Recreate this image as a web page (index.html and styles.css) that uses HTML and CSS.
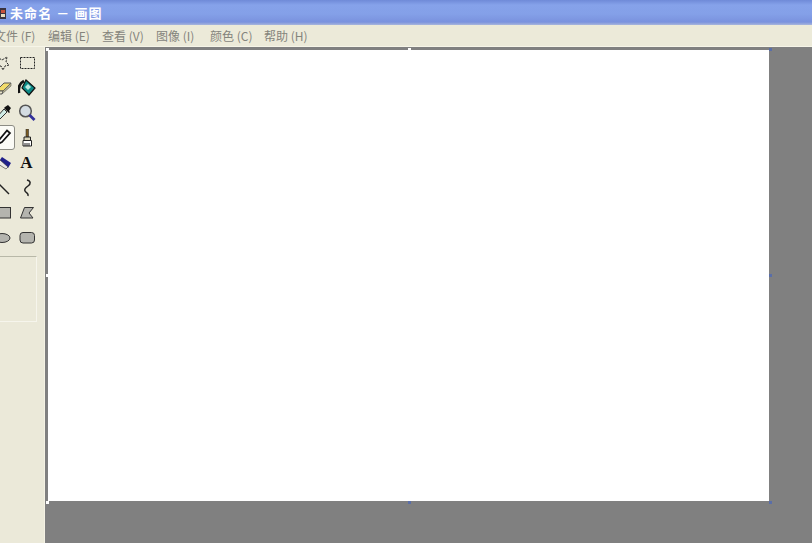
FILE: index.html
```html
<!DOCTYPE html>
<html lang="zh">
<head>
<meta charset="utf-8">
<title>未命名 - 画图</title>
<link rel="stylesheet" href="styles.css">
</head>
<body>
<div class="app">
  <header class="titlebar">
    <svg class="appicon" width="16" height="16" viewBox="0 0 16 16"><path d="M8 3h6v11H8z" fill="#3a3340"/><path d="M9 5h4v3H9z" fill="#c8503c"/><path d="M9 9h4v3H9z" fill="#e8dcc0"/></svg>
    <span class="title">未命名 － 画图</span>
  </header>
  <nav class="menubar">
    <span class="menu first">文件 (F)</span>
    <span class="menu">编辑 (E)</span>
    <span class="menu">查看 (V)</span>
    <span class="menu">图像 (I)</span>
    <span class="menu">颜色 (C)</span>
    <span class="menu">帮助 (H)</span>
  </nav>
  <div class="body">
    <aside class="sidebar">
      <div class="tools">
        <div class="tool"><svg width="18" height="18" viewBox="0 0 18 18"><path d="M3 3l5 3 5-3-1 5 3 3-4 1-2 4-2-4-5 0 3-4z" fill="none" stroke="#222" stroke-dasharray="2 1"/></svg></div>
        <div class="tool"><svg width="18" height="18" viewBox="0 0 18 18"><rect x="2.500" y="3.500" width="14" height="11" fill="none" stroke="#222" stroke-dasharray="2 1"/></svg></div>

        <div class="tool"><svg width="18" height="18" viewBox="0 0 18 18"><path d="M2 12l8-8h7l-8 8z" fill="#f2dc6a" stroke="#555"/><path d="M2 12l1 3h5l1-3z" fill="#e8e4c8" stroke="#555"/><path d="M8 15l9-8V4l-8 8z" fill="#b8b48c" stroke="#555" stroke-width=".6"/></svg></div>
        <div class="tool"><svg width="18" height="18" viewBox="0 0 18 18"><path d="M8 1l9 8-6 7-7-7z" fill="#0c8a86" stroke="#111" stroke-width="1.200"/><path d="M10 5l3 3-3 3-3-3z" fill="#b8e8e0"/><path d="M6 2C2 4 0 8 1 14" fill="none" stroke="#111" stroke-width="2.800"/></svg></div>

        <div class="tool"><svg width="18" height="18" viewBox="0 0 18 18"><path d="M11 3l3-2 3 3-2 3 1 1-1 1-5-5 1-1z" fill="#111"/><path d="M10 5l3 3-7 7-3 1 0-3z" fill="#d0ece6" stroke="#333"/><path d="M1 13l4 3-4 2z" fill="#1aa99a"/></svg></div>
        <div class="tool"><svg width="18" height="18" viewBox="0 0 18 18"><circle cx="7.500" cy="7" r="5.800" fill="#d4dce2" stroke="#555" stroke-width="1.500"/><path d="M11.500 11l5 5" stroke="#33309a" stroke-width="2.800"/></svg></div>

        <div class="tool selected"><svg width="18" height="18" viewBox="0 0 18 18"><path d="M13 1.500l3 2.500-8 9-4 2 1-4z" fill="#fff" stroke="#111" stroke-width="1.700"/><path d="M5 15c-2 1-3 2-2 3" fill="none" stroke="#111" stroke-width="1.500"/></svg></div>
        <div class="tool"><svg width="18" height="18" viewBox="0 0 18 18"><path d="M8 0h2.500v8H8z" fill="#7a5a20" stroke="#333" stroke-width=".6"/><path d="M6 8h6.500v3.500H6z" fill="#d8d4b8" stroke="#222"/><path d="M5 11.500h8.500V17H5z" fill="#fff" stroke="#222"/><path d="M7 14v3M9 14v3M11 14v3" stroke="#222"/></svg></div>

        <div class="tool"><svg width="18" height="18" viewBox="0 0 18 18"><path d="M8 3l9 6-3 5-9-7z" fill="#20208a"/><path d="M6 6l8 7-2 2-8-5z" fill="#ece9e8" stroke="#333" stroke-width=".6"/></svg></div>
        <div class="tool"><span class="letter">A</span></div>

        <div class="tool"><svg width="18" height="18" viewBox="0 0 18 18"><path d="M3 3l12 12" stroke="#222" stroke-width="1.500" fill="none"/></svg></div>
        <div class="tool"><svg width="18" height="18" viewBox="0 0 18 18"><path d="M9 1c4 1 4 4 1 6S6 10 7 12s4 2 3 5" fill="none" stroke="#222" stroke-width="1.500"/></svg></div>

        <div class="tool"><svg width="18" height="18" viewBox="0 0 18 18"><rect x="2" y="3.500" width="14.500" height="10.500" fill="#b4b4ae" stroke="#333"/></svg></div>
        <div class="tool"><svg width="18" height="18" viewBox="0 0 18 18"><path d="M6.500 3.500h9L11 9l4 5H2.500z" fill="#b4b4ae" stroke="#333"/></svg></div>

        <div class="tool"><svg width="18" height="18" viewBox="0 0 18 18"><ellipse cx="8" cy="9" rx="8" ry="4.500" fill="#b4b4ae" stroke="#333"/></svg></div>
        <div class="tool"><svg width="18" height="18" viewBox="0 0 18 18"><rect x="2" y="3.500" width="14.500" height="10.500" rx="3" fill="#b4b4ae" stroke="#333"/></svg></div>
      </div>
      <div class="options"></div>
    </aside>
    <main class="workspace">
      <div class="canvas">
        <i class="handle tl"></i><i class="handle tc"></i><i class="handle tr"></i>
        <i class="handle ml"></i><i class="handle mr"></i>
        <i class="handle bl"></i><i class="handle bc"></i><i class="handle br"></i>
      </div>
    </main>
  </div>
</div>
</body>
</html>
```
FILE: styles.css
```css
* { box-sizing: border-box; }
html, body { margin: 0; height: 100%; overflow: hidden; }
body { font-family: "Liberation Sans", "Noto Sans CJK SC", sans-serif; }

.app { width: 812px; height: 543px; display: flex; flex-direction: column; overflow: hidden; }

.titlebar {
  height: 25px;
  flex: none;
  display: flex;
  align-items: center;
  gap: 2px;
  margin-left: -8px;
  background: linear-gradient(#6f8ad8 0, #86a2ea 5px, #84a0e8 14px, #7a92de 22px, #a8b6dc 25px);
}
.appicon { flex: none; }
.title {
  color: #fff;
  font: bold 13px "Noto Sans CJK SC", sans-serif;
  letter-spacing: 1.1px;
  white-space: pre;
}

.menubar {
  height: 22px;
  flex: none;
  display: flex;
  align-items: center;
  margin-left: -6px;
  background: #ecead9;
  border-bottom: 1px solid #f6f5e8;
  font: 12px "Noto Sans CJK SC", sans-serif;
  color: #84847c;
}
.menu { width: 54px; flex: none; white-space: nowrap; }

.body { flex: 1; display: flex; min-height: 0; }

.sidebar {
  width: 45px;
  flex: none;
  background: #ebe9d9;
  border-right: 1px solid #f4f2e4;
  overflow: hidden;
  padding-top: 3px;
}
.tools {
  display: grid;
  grid-template-columns: 25px 23px;
  grid-auto-rows: 25px;
  margin-left: -10px;
}
.tool { display: flex; align-items: center; justify-content: center; }
.tool.selected { background: #fbfbf6; border: 1px solid #8c8c84; border-radius: 3px; }
.letter { font: bold 17px "Liberation Serif", serif; color: #111; }

.options {
  width: 49px;
  height: 66px;
  margin: 6px 0 0 -12px;
  border: 1px solid #f6f5ec;
  border-top-color: #b8b8a8;
}

.workspace {
  flex: 1;
  background: #808080;
  padding: 3px 0 0 3px;
}
.canvas { position: relative; width: 721px; height: 451px; background: #fff; }
.handle { position: absolute; width: 3px; height: 3px; background: #5a6ea8; }
.handle.tl { left: -2px; top: -2px; background: #fff; }
.handle.tc { left: 360px; top: -2px; background: #fff; }
.handle.tr { left: 721px; top: -2px; }
.handle.ml { left: -2px; top: 224px; background: #fff; }
.handle.mr { left: 721px; top: 224px; }
.handle.bl { left: -2px; top: 451px; background: #fff; }
.handle.bc { left: 360px; top: 451px; }
.handle.br { left: 721px; top: 451px; }
```
